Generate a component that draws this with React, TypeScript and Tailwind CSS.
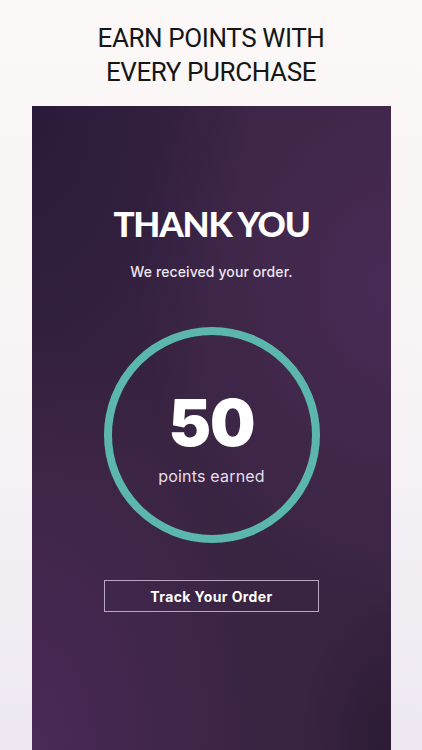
export default function App() {
  return (
    <div className="w-[422px] h-[750px] overflow-hidden bg-gradient-to-b from-[#fcf8f7] via-[#f8f4f5] to-[#efe8f3] flex flex-col items-center font-['Inter','Liberation_Sans',sans-serif]">
      {/* Store caption */}
      <h1 className="mt-[21px] text-center text-[26px] leading-[34px] font-normal text-[#161616] tracking-[-0.4px] font-['Roboto','Liberation_Sans',sans-serif]">
        EARN POINTS WITH
        <br />
        EVERY PURCHASE
      </h1>

      {/* Phone screen */}
      <div className="mt-[17px] ml-[1px] w-[359px] flex-1 relative bg-[#392442] bg-[radial-gradient(ellipse_at_100%_28%,#492b55_0%,transparent_50%),radial-gradient(ellipse_at_0%_100%,#4a2956_0%,transparent_45%),radial-gradient(ellipse_at_100%_100%,#2b1b34_0%,transparent_18%),radial-gradient(ellipse_at_0%_0%,#2a1a3a_0%,transparent_45%)] flex flex-col items-center">
        <h2 className="mt-[97px] text-[35px] leading-[40px] font-black text-white tracking-[-1.2px] font-['Lato','Inter',sans-serif]">
          THANK YOU
        </h2>
        <p className="mt-[20px] text-[14px] leading-[18px] font-medium text-[#ece6ef] tracking-[0.1px]">
          We received your order.
        </p>

        <div className="mt-[46px] w-[216px] h-[216px] rounded-full border-[8px] border-[#5bb7ad] flex flex-col items-center justify-center">
          <div className="mt-[6px] text-[64px] leading-[66px] font-black text-white tracking-[-1px]">
            50
          </div>
          <div className="mt-[10px] text-[16px] leading-[20px] text-[#e6dfea] tracking-[0.2px]">
            points earned
          </div>
        </div>

        <button className="mt-[37px] w-[215px] h-[32px] border border-[#b9a6c2] text-white text-[14px] font-bold tracking-[0.4px]">
          Track Your Order
        </button>
      </div>
    </div>
  );
}
